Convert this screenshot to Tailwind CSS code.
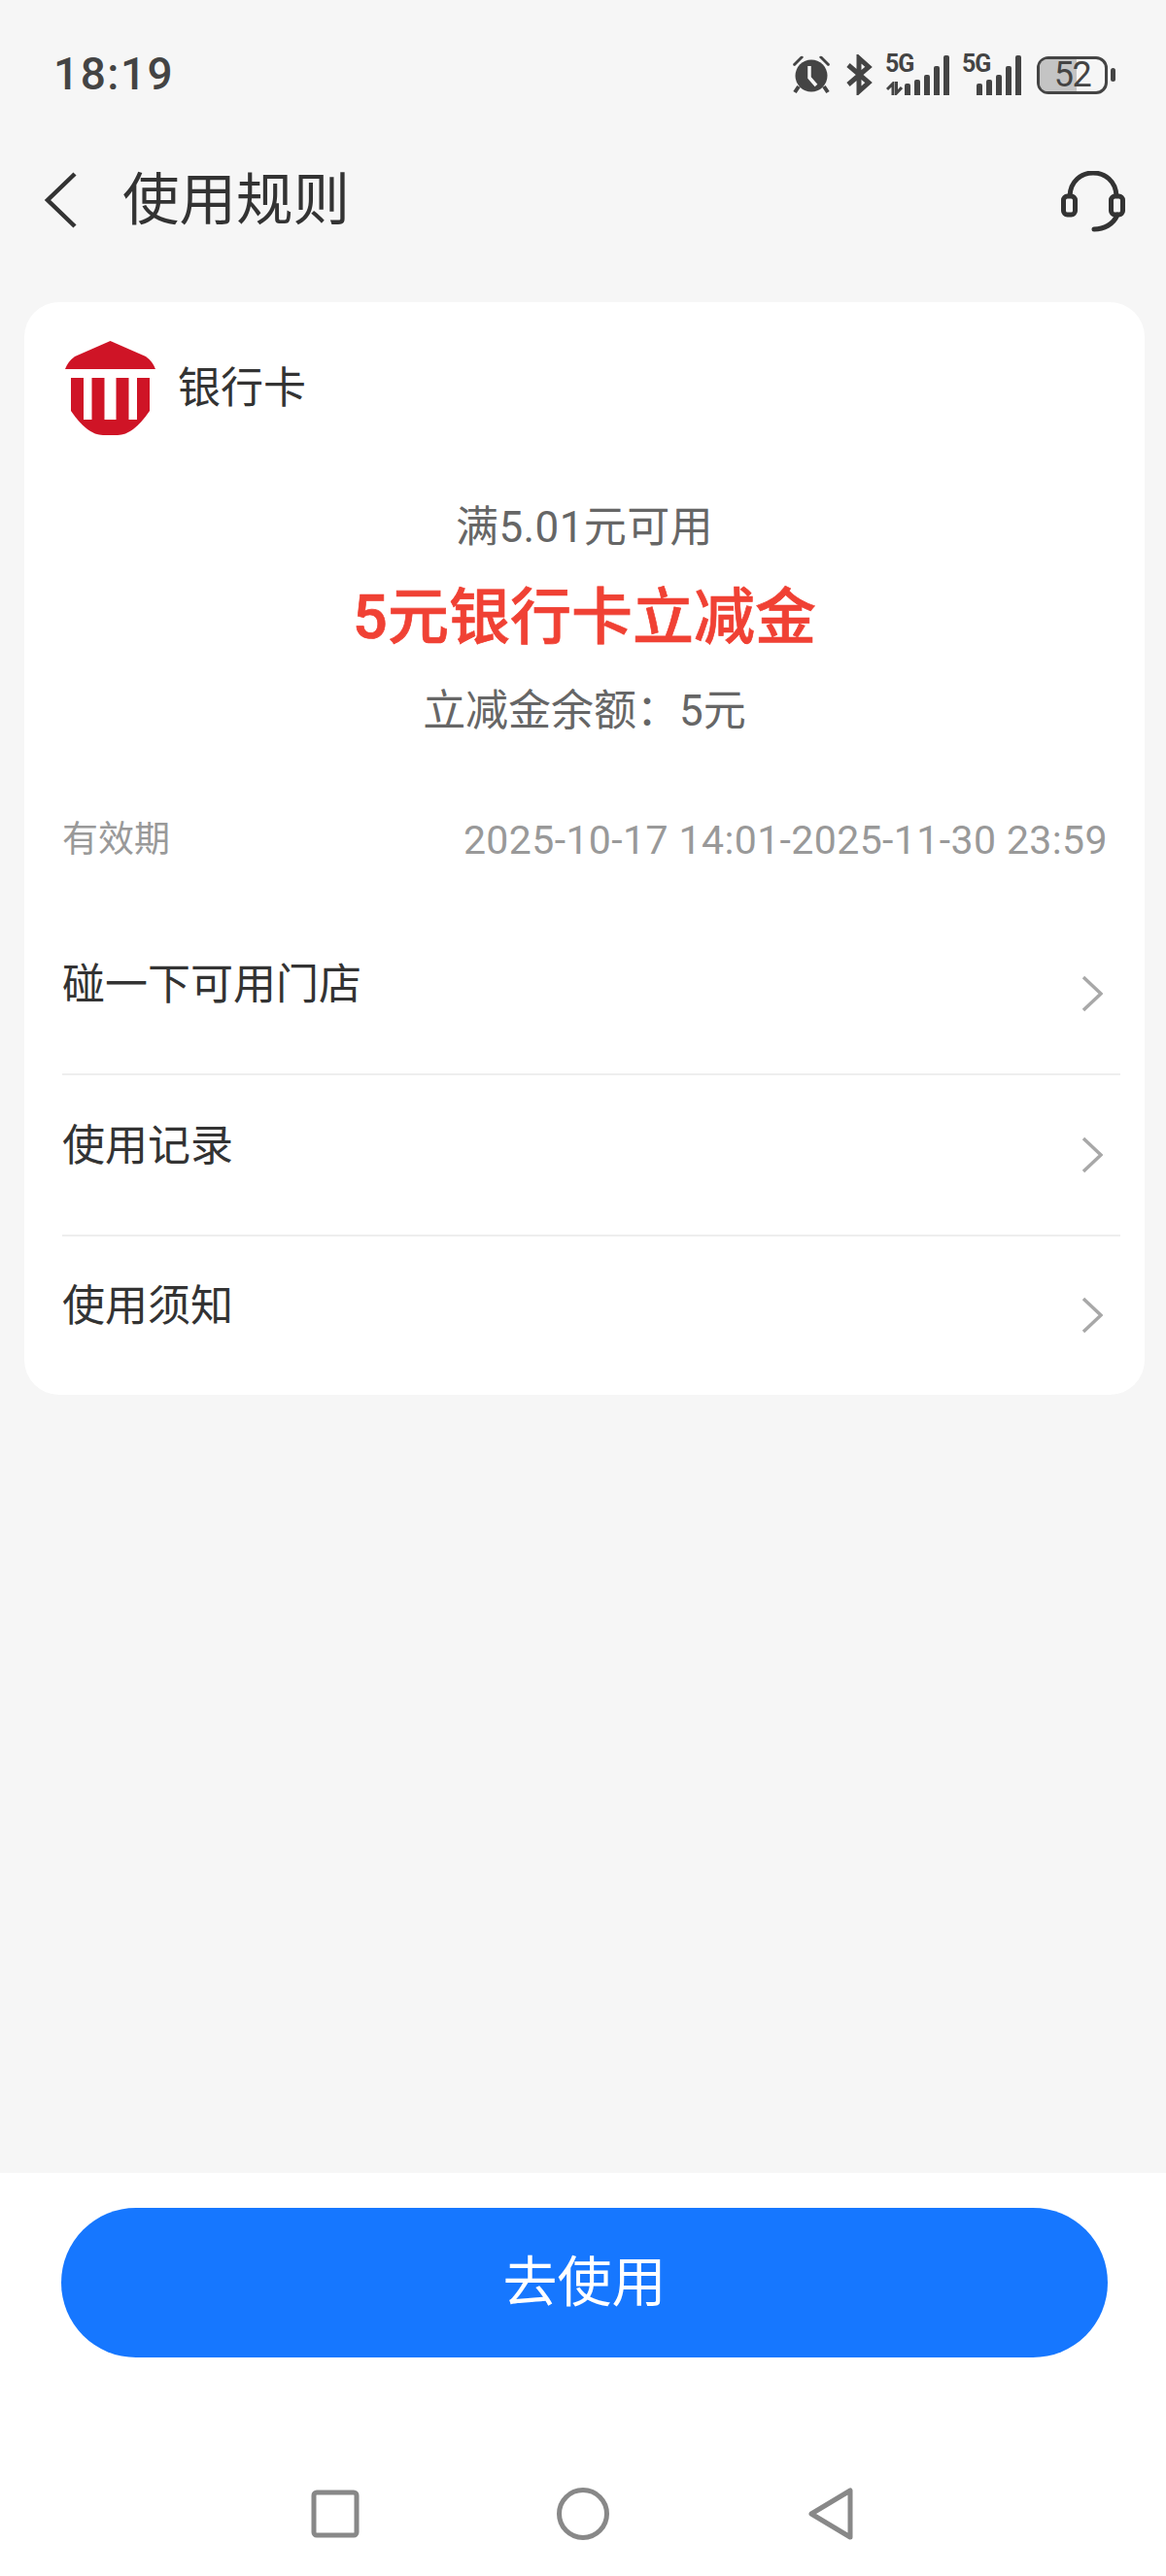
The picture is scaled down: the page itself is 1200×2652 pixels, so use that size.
<!DOCTYPE html>
<html lang="en">
<head>
  <meta charset="UTF-8" />
  <meta name="viewport" content="width=device-width, initial-scale=1.0" />
  <title>使用规则</title>
  <script src="https://cdn.jsdelivr.net/npm/@tailwindcss/browser@4"></script>
</head>
<body class="bg-[#f6f6f6] font-['Roboto','Noto_Sans_CJK_SC',sans-serif]">
  <div class="w-[1200px] h-[2652px] flex flex-col overflow-hidden">

    <!-- status bar -->
    <div class="h-[150px] pl-[55px] pr-[52px] flex items-start justify-between text-[#444]">
      <span class="mt-[48px] text-[46px] leading-[56px] font-medium tracking-[1.5px]">18:19</span>
      <div class="mt-[56px] flex items-center h-[42px]">
        <svg class="w-[40px] h-[42px]" viewBox="0 0 40 42" fill="#444">
          <circle cx="20" cy="22" r="16.5" />
          <path d="M1 10 L9 2 Q11 1 12 3 L3 12 Q1 12 1 10Z M39 10 L31 2 Q29 1 28 3 L37 12 Q39 12 39 10Z" />
          <path d="M7 33 L3 39 M33 33 L37 39" fill="none" stroke="#444" stroke-width="4" />
          <path d="M18 12v12l7 8" fill="none" stroke="#f6f6f6" stroke-width="3.5" />
        </svg>
        <svg class="ml-[16px] w-[27px] h-[42px]" viewBox="0 0 27 42" fill="none" stroke="#444" stroke-width="5">
          <path d="M2 11 L23 29 L13 38 V4 L23 13 L2 31" />
        </svg>
        <div class="ml-[13px] relative w-[66px] h-[42px]">
          <span class="absolute left-0 top-[-1px] text-[25px] leading-[21px] font-bold tracking-[-1px]">5G</span>
          <svg class="absolute left-[1px] bottom-0 w-[17px] h-[14px]" viewBox="0 0 17 14" fill="none" stroke="#444" stroke-width="3">
            <path d="M1 8 L7 2 V14 M10.5 0 V12 L16 6" />
          </svg>
          <div class="absolute right-0 bottom-0 flex items-end gap-[3.5px]">
            <div class="w-[6.5px] h-[12px] rounded-t-[2px] bg-[#444]"></div>
            <div class="w-[6.5px] h-[16px] rounded-t-[2px] bg-[#444]"></div>
            <div class="w-[6.5px] h-[21px] rounded-t-[2px] bg-[#444]"></div>
            <div class="w-[6.5px] h-[30px] rounded-t-[2px] bg-[#444]"></div>
            <div class="w-[6.5px] h-[41px] rounded-t-[2px] bg-[#444]"></div>
          </div>
        </div>
        <div class="ml-[13px] relative w-[61px] h-[42px]">
          <span class="absolute left-0 top-[-1px] text-[25px] leading-[21px] font-bold tracking-[-1px]">5G</span>
          <div class="absolute right-0 bottom-0 flex items-end gap-[3.5px]">
            <div class="w-[6.5px] h-[12px] rounded-t-[2px] bg-[#444]"></div>
            <div class="w-[6.5px] h-[16px] rounded-t-[2px] bg-[#444]"></div>
            <div class="w-[6.5px] h-[21px] rounded-t-[2px] bg-[#444]"></div>
            <div class="w-[6.5px] h-[30px] rounded-t-[2px] bg-[#444]"></div>
            <div class="w-[6.5px] h-[41px] rounded-t-[2px] bg-[#444]"></div>
          </div>
        </div>
        <div class="ml-[16px] relative w-[73px] h-[39px] rounded-[12px] border-[3.5px] border-[#444] flex items-center justify-center">
          <div class="absolute left-0 top-0 bottom-0 w-[57%] rounded-l-[8px] bg-[#c4c4c4]"></div>
          <span class="relative text-[36px] leading-[32px] tracking-[-1.5px]">52</span>
        </div>
        <div class="ml-[3px] w-[5px] h-[14px] rounded-full bg-[#444]"></div>
      </div>
    </div>

    <!-- title bar -->
    <div class="h-[111px] flex items-center pl-[45px] pr-[42px] text-[#333]">
      <svg class="w-[34px] h-[58px]" viewBox="0 0 34 58" fill="none" stroke="#333" stroke-width="4.5">
        <path d="M32 2 L4 29 L32 56" />
      </svg>
      <span class="ml-[47px] text-[58.5px] leading-[70px]">使用规则</span>
      <svg class="ml-auto mt-[4px] w-[66px] h-[63px]" viewBox="0 0 66 63" fill="none" stroke="#333" stroke-width="5">
        <path d="M9 26 C10 -6 56 -6 57 26" />
        <rect x="2.5" y="26" width="12" height="19" rx="4" />
        <rect x="51.5" y="26" width="12" height="19" rx="4" />
        <path d="M58 45 C54 55 44 60 34 60" stroke-linecap="round" />
      </svg>
    </div>

    <!-- card -->
    <div class="ml-[25px] mt-[50px] w-[1153px] h-[1125px] bg-white rounded-[36px] flex flex-col">
      <div class="h-[97px] mt-[40px] pl-[42px] flex items-center">
        <svg class="w-[93px] h-[97px]" viewBox="0 0 93 97" fill="#cf1426">
          <path d="M46.5 0 L83 16 Q90 21 93 29 H0 Q3 21 10 16Z" />
          <path d="M6 38 H87 V72 Q70 97 54 97 H39 Q23 97 6 72Z" />
          <path d="M19 38 H27.5 V81 H19Z M40.5 38 H52.5 V81 H40.5Z M65.5 38 H74 V81 H65.5Z" fill="#fff" />
        </svg>
        <span class="ml-[23px] text-[44px] leading-[54px] text-[#333]">银行卡</span>
      </div>
      <div class="mt-[68px] text-center text-[#666] text-[44px] leading-[54px] tracking-[0.4px]">满5.01元可用</div>
      <div class="mt-[26px] text-center text-[#f04134] text-[63px] leading-[80px] font-medium [-webkit-text-stroke:0.7px_#f04134]">5元银行卡立减金</div>
      <div class="mt-[29px] text-center text-[#666] text-[44px] leading-[54px]">立减金余额：5元</div>

      <div class="mt-[82px] pl-[39px] pr-[38px] flex items-center justify-between text-[#999] leading-[48px]">
        <span class="text-[37px]">有效期</span>
        <span class="text-[41px] tracking-[0.4px]">2025-10-17 14:01-2025-11-30 23:59</span>
      </div>

      <div class="mt-[52px] ml-[39px] mr-[25px] flex flex-col text-[#333] text-[44px]">
        <div class="h-[166px] flex items-start justify-between border-b-2 border-[#eee]">
          <span class="mt-[46px] leading-[54px]">碰一下可用门店</span>
          <svg class="mt-[63px] mr-[18px] w-[22px] h-[38px]" viewBox="0 0 22 38" fill="none" stroke="#a8a8a8" stroke-width="3.5"><path d="M2 2 L20 19 L2 36" /></svg>
        </div>
        <div class="h-[166px] flex items-start justify-between border-b-2 border-[#eee]">
          <span class="mt-[46px] leading-[54px]">使用记录</span>
          <svg class="mt-[63px] mr-[18px] w-[22px] h-[38px]" viewBox="0 0 22 38" fill="none" stroke="#a8a8a8" stroke-width="3.5"><path d="M2 2 L20 19 L2 36" /></svg>
        </div>
        <div class="h-[160px] flex items-start justify-between">
          <span class="mt-[45px] leading-[54px]">使用须知</span>
          <svg class="mt-[62px] mr-[18px] w-[22px] h-[38px]" viewBox="0 0 22 38" fill="none" stroke="#a8a8a8" stroke-width="3.5"><path d="M2 2 L20 19 L2 36" /></svg>
        </div>
      </div>
    </div>

    <!-- bottom -->
    <div class="mt-auto h-[415px] bg-white flex flex-col">
      <button class="mt-[36px] ml-[63px] w-[1077px] h-[154px] rounded-full bg-[#1677ff] text-white text-[56px]">去使用</button>
      <div class="mt-[134px] flex items-center pl-[320px]">
        <svg class="w-[50px] h-[50px]" viewBox="0 0 50 50" fill="none" stroke="#888" stroke-width="5"><rect x="3" y="3" width="44" height="44" rx="3" /></svg>
        <svg class="ml-[203px] w-[54px] h-[54px]" viewBox="0 0 54 54" fill="none" stroke="#888" stroke-width="5"><circle cx="27" cy="27" r="24.5" /></svg>
        <svg class="ml-[205px] w-[46px] h-[54px]" viewBox="0 0 46 54" fill="none" stroke="#888" stroke-width="5" stroke-linejoin="round"><path d="M43 3 V51 L3 27Z" /></svg>
      </div>
    </div>
  </div>
</body>
</html>
